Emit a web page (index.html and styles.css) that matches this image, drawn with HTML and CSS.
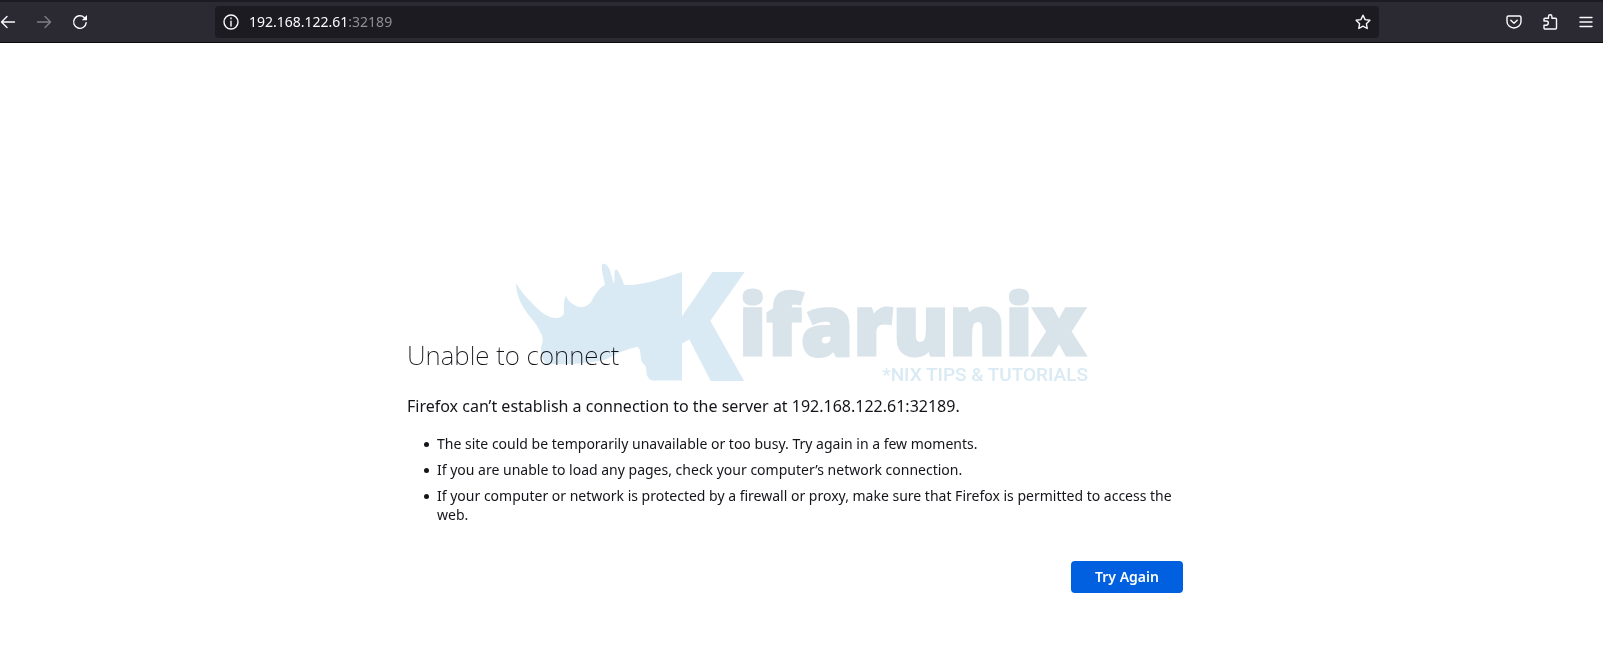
FILE: index.html
```
<!DOCTYPE html>
<html lang="en">
	<head>
		<meta charset="UTF-8" />
		<meta name="viewport" content="width=device-width, initial-scale=1.0" />
		<title>Problem loading page</title>
		<link rel="stylesheet" href="styles.css">
	</head>
	<body>
		<header class="toolbar">
			<nav class="nav-buttons">
				<button class="icon-btn" aria-label="Back">
					<svg viewBox="0 0 16 16"><path d="M14.500 8H1.500M7 2.500 1.500 8 7 13.500" /></svg>
				</button>
				<button class="icon-btn" aria-label="Forward" disabled>
					<svg viewBox="0 0 16 16"><path d="M1.500 8h13M9 2.500 14.500 8 9 13.500" /></svg>
				</button>
				<button class="icon-btn" aria-label="Reload">
					<svg viewBox="0 0 16 16"><path d="M14.200 8.600a6.300 6.300 0 1 1-2-5.200l1.600 1.600" /><path class="filled" d="M15 1v5.200H9.800z" /></svg>
				</button>
			</nav>

			<div class="url-bar">
				<button class="icon-btn" aria-label="Site information">
					<svg viewBox="0 0 16 16"><circle cx="8" cy="8" r="7" /><path d="M8 7.200V12M8 4v.8" /></svg>
				</button>
				<div class="url">192.168.122.61<span class="port">:32189</span></div>
				<button class="icon-btn" aria-label="Bookmark this page">
					<svg viewBox="0 0 16 16"><path d="m8 1.200 2.100 4.400 4.800.7-3.500 3.400.8 4.800L8 12.200l-4.200 2.300.8-4.800L1.100 6.300l4.800-.7z" /></svg>
				</button>
			</div>

			<div class="tool-buttons">
				<button class="icon-btn" aria-label="Save to Pocket">
					<svg viewBox="0 0 16 16"><path d="M2.500 2h11a1.500 1.500 0 0 1 1.500 1.500V7.500a7 6.500 0 0 1-14 0V3.500A1.500 1.500 0 0 1 2.500 2z" /><path d="M4.800 6.300 8 9.300l3.200-3" /></svg>
				</button>
				<button class="icon-btn" aria-label="Extensions">
					<svg viewBox="0 0 16 16"><path d="M2 7V5.200a1 1 0 0 1 1-1h3.500V2.500a1.700 1.700 0 0 1 3.400 0v1.700H13.500a1 1 0 0 1 1 1V14a1 1 0 0 1-1 1H3a1 1 0 0 1-1-1v-2.800h2.200a2.100 2.100 0 0 0 0-4.200z" /></svg>
				</button>
				<button class="icon-btn" aria-label="Open application menu">
					<svg viewBox="0 0 16 16"><path d="M2 3.500h12M2 8h12M2 12.500h12" /></svg>
				</button>
			</div>
		</header>

		<main class="page">
			<svg class="watermark" viewBox="0 0 580 130" role="img" aria-label="Kifarunix">
				<clipPath id="k-arms"><path d="M166 0h80v130h-80z" /></clipPath>
				<path class="rhino" d="M1 20C5 27 10 33 16 39c5 5 10 11 17 14 4 2 7 2 10 2 4-1 6-3 6-6 0-6-1-11 2-16 1 2 2 4 4 6 4 3 7 5 11 5 4 0 8-2 10-5 4-8 8-14 14-17-1-7-4-14-3-21 3-1 5 1 7 4 2 5 3 10 5 16 1-5 0-10 1-14 2-1 3 0 4 3 2 4 4 8 5 12 19 1 39-7 58-13v108.500h-29c-3 0-5-3-6-5-1-4 0-7-2-10-2-2-4-4-4-7-1-4 0-8-2-10-1-2-3-2-4-1-6 1-12 4-18 6-5 3-10 6-16 7-17 3-35 5-55 3-4-4-5-10-5-15 0-3 3-7 1-13-2-4-5-10-8-14C10 48 1 36 1 20z" />
				<g clip-path="url(#k-arms)"><text class="mark-k" x="124" y="118">K</text></g>
				<text class="mark-name" x="224" y="92">ifarunix</text>
				<text class="mark-tag" x="573" y="118">*NIX TIPS &amp; TUTORIALS</text>
			</svg>

			<section class="error">
				<h1>Unable to connect</h1>
				<p class="summary">Firefox can’t establish a connection to the server at 192.168.122.61:32189.</p>
				<ul>
					<li>The site could be temporarily unavailable or too busy. Try again in a few moments.</li>
					<li>If you are unable to load any pages, check your computer’s network connection.</li>
					<li>If your computer or network is protected by a firewall or proxy, make sure that Firefox is permitted to access the web.</li>
				</ul>
				<div class="actions">
					<button class="try-again">Try Again</button>
				</div>
			</section>
		</main>
	</body>
</html>
```
FILE: styles.css
```
:root {
	--toolbar-bg: #2b2a33;
	--field-bg: #1c1b22;
	--toolbar-text: #fbfbfe;
	--text-color: #15141a;
	--primary-color: #0060df;
	--mark-blue: #daeaf4;
	--mark-grey: #d9e3ea;
}

* {
	box-sizing: border-box;
	margin: 0;
	padding: 0;
}

body {
	font-family: 'Noto Sans', 'Open Sans', sans-serif;
	font-size: 14px;
	line-height: 20px;
	background: #fff;
	color: var(--text-color);
}

button {
	border: 0;
	font: inherit;
	cursor: pointer;
}

/* Toolbar */
.toolbar {
	display: flex;
	align-items: center;
	height: 43px;
	background: var(--toolbar-bg);
	border-top: 2px solid var(--field-bg);
	border-bottom: 1px solid #0c0c0d;
	color: var(--toolbar-text);
}

.nav-buttons {
	display: flex;
	gap: 20px;
	width: 215px;
}

.icon-btn {
	flex: none;
	width: 16px;
	height: 16px;
	background: none;
	color: inherit;
}

.icon-btn:disabled {
	opacity: 0.4;
}

.icon-btn svg {
	display: block;
	width: 16px;
	height: 16px;
	fill: none;
	stroke: currentColor;
	stroke-width: 1.4;
	stroke-linejoin: round;
	stroke-linecap: round;
}

.icon-btn .filled {
	fill: currentColor;
	stroke: none;
}

.url-bar {
	flex: 1;
	display: flex;
	align-items: center;
	gap: 10px;
	height: 32px;
	padding: 0 8px;
	border-radius: 4px;
	background: var(--field-bg);
}

.url {
	flex: 1;
}

.port {
	color: #8f8f96;
}

.tool-buttons {
	display: flex;
	justify-content: flex-end;
	gap: 20px;
	width: 224px;
	padding-right: 9px;
}

/* Error page */
.page {
	position: relative;
	padding: 292px 13px 40px 0;
}

.error {
	max-width: 776px;
	margin: 0 auto;
}

h1 {
	margin-bottom: 19px;
	font-size: 26px;
	font-weight: 200;
	line-height: 40px;
}

.summary {
	margin-bottom: 16px;
	font-size: 16px;
	line-height: 24px;
}

ul {
	padding-left: 17px;
	list-style: none;
}

li {
	display: flex;
	gap: 8px;
	margin-bottom: 7px;
	line-height: 19px;
}

li::before {
	content: '';
	flex: none;
	width: 5px;
	height: 5px;
	margin-top: 8px;
	border-radius: 50%;
	background: currentColor;
}

.actions {
	display: flex;
	justify-content: flex-end;
	margin-top: 37px;
}

.try-again {
	min-width: 112px;
	height: 32px;
	border-radius: 4px;
	background: var(--primary-color);
	color: #fff;
	font-weight: 600;
}

/* Logo laid over the page */
.watermark {
	position: absolute;
	top: 220px;
	left: calc(50% - 287px);
	width: 580px;
	overflow: visible;
	mix-blend-mode: multiply;
	pointer-events: none;
}

.rhino,
.mark-k,
.mark-tag {
	fill: var(--mark-blue);
}

.mark-k {
	font: 800 153px 'Open Sans', sans-serif;
}

.mark-name {
	fill: var(--mark-grey);
	stroke: var(--mark-grey);
	stroke-width: 3;
	font: 900 84px 'Noto Sans', sans-serif;
}

.mark-tag {
	font: 500 19px Roboto, sans-serif;
	text-anchor: end;
}
```
